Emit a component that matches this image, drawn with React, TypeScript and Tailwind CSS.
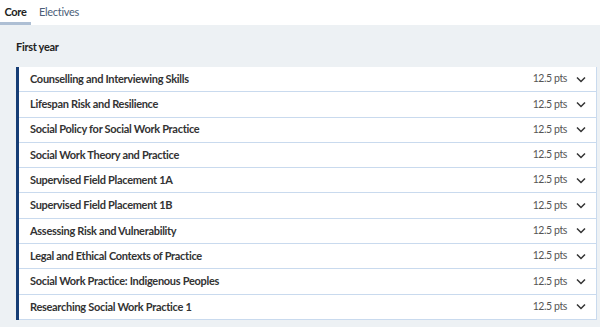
import React from "react";

const courses = [
  "Counselling and Interviewing Skills",
  "Lifespan Risk and Resilience",
  "Social Policy for Social Work Practice",
  "Social Work Theory and Practice",
  "Supervised Field Placement 1A",
  "Supervised Field Placement 1B",
  "Assessing Risk and Vulnerability",
  "Legal and Ethical Contexts of Practice",
  "Social Work Practice: Indigenous Peoples",
  "Researching Social Work Practice 1",
];

function Chevron() {
  return (
    <svg width="10" height="7" viewBox="0 0 10 7" className="text-[#333]">
      <path d="M1 1.5 L5 5.5 L9 1.5" fill="none" stroke="currentColor" strokeWidth="1.5" />
    </svg>
  );
}

export default function App() {
  return (
    <div className="w-[600px] h-[327px] bg-white overflow-hidden" style={{ fontFamily: "Lato, 'Open Sans', sans-serif" }}>
      <div className="flex h-[25px] items-stretch">
        <div className="w-[31px] flex items-center justify-center border-b-[3px] border-[#aebfd4] text-[11px] font-bold text-[#222] tracking-[-0.3px] pt-[2px]">
          Core
        </div>
        <div className="pl-[8px] flex items-center text-[11px] text-[#4b5e78] tracking-[-0.3px] pb-[1px]">Electives</div>
      </div>
      <div className="bg-[#edf1f4] h-[302px] pl-[16px] pr-[3px]">
        <div className="h-[42px] flex items-center text-[11px] font-bold text-[#222] tracking-[-0.3px] pt-[3px]">First year</div>
        <div className="border-l-[3px] border-[#163d75] border-r border-r-[#c9daee] bg-white">
          {courses.map((c) => (
            <div key={c} className="h-[25.3px] flex items-center border-b border-[#c9daee] pl-[11px] pr-[10px]">
              <div className="flex-1 text-[11px] font-bold text-[#333] tracking-[-0.3px]">{c}</div>
              <div className="text-[10.5px] text-[#555] tracking-[-0.4px] mr-[9px]">12.5 pts</div>
              <Chevron />
            </div>
          ))}
        </div>
      </div>
    </div>
  );
}
